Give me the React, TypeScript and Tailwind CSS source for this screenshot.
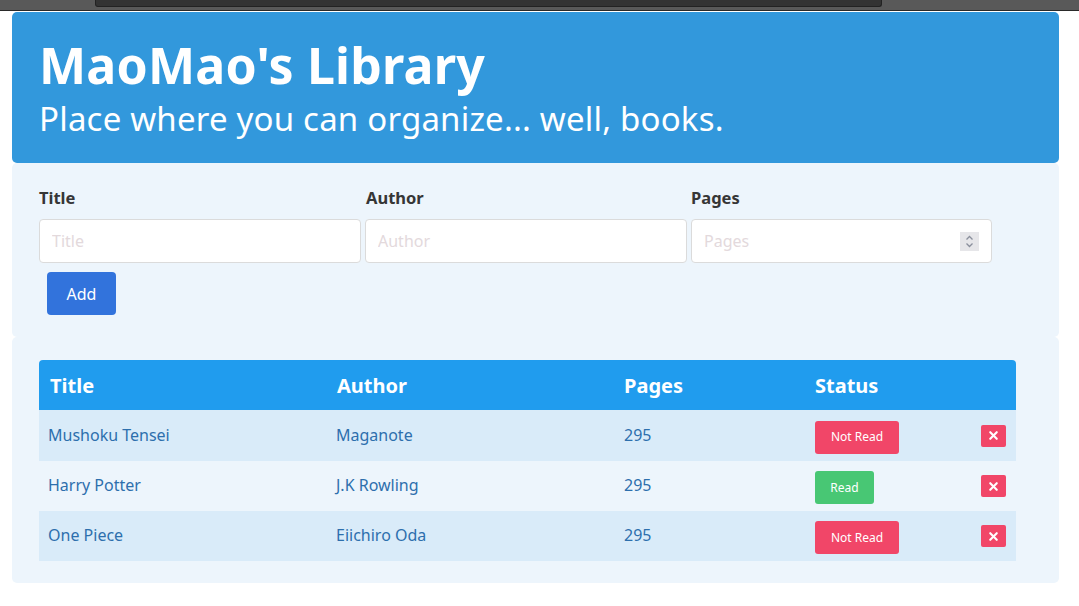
import React from 'react';
import { X } from 'lucide-react';

type Book = { title: string; author: string; pages: number; read: boolean };

const books: Book[] = [
  { title: 'Mushoku Tensei', author: 'Maganote', pages: 295, read: false },
  { title: 'Harry Potter', author: 'J.K Rowling', pages: 295, read: true },
  { title: 'One Piece', author: 'Eiichiro Oda', pages: 295, read: false },
];

const Spinner: React.FC = () => (
  <div className="w-[19px] h-[19px] bg-[#e6e6e9] flex items-center justify-center">
    <svg width="9" height="13" viewBox="0 0 9 13" fill="none" stroke="#8a8f9c" strokeWidth="1.3">
      <path d="M1.5 4.5 L4.5 1.5 L7.5 4.5" />
      <path d="M1.5 8.5 L4.5 11.5 L7.5 8.5" />
    </svg>
  </div>
);

const App: React.FC = () => {
  return (
    <div className="min-h-screen bg-white font-['Noto_Sans',sans-serif]">
      {/* window chrome */}
      <div className="h-[11px] bg-[#595959] border-b border-[#2a2a2a]">
        <div className="ml-[95px] w-[787px] h-[7px] bg-[#333333] border border-t-0 border-[#222] rounded-b-[3px]" />
      </div>

      <div className="pl-[12px] pr-[20px] pt-[1px]">
        <header className="bg-[#3298dc] rounded-[5px] px-[27px] pt-[21px] h-[151px] text-white">
          <h1 className="text-[50px] font-bold leading-[64px] tracking-[0.2px]">MaoMao's Library</h1>
          <p className="text-[33px] leading-[44px] tracking-[0.2px]">Place where you can organize... well, books.</p>
        </header>

        <section className="bg-[#edf5fc] rounded-[5px] px-[27px] pt-[25px] h-[174px]">
          <div className="grid grid-cols-[322px_322px_301px] gap-x-[4px]">
            <label className="text-[16.5px] font-bold text-[#363636] leading-[20px]">Title</label>
            <label className="text-[16.5px] font-bold text-[#363636] leading-[20px] pl-px">Author</label>
            <label className="text-[16.5px] font-bold text-[#363636] leading-[20px]">Pages</label>
            <input
              placeholder="Title"
              className="mt-[11px] h-[44px] bg-white border border-[#dbdbdb] rounded-[4px] px-[12px] text-[16px] placeholder:text-[#e3d9dc] outline-none"
            />
            <input
              placeholder="Author"
              className="mt-[11px] h-[44px] bg-white border border-[#dbdbdb] rounded-[4px] px-[12px] text-[16px] placeholder:text-[#e3d9dc] outline-none"
            />
            <div className="mt-[11px] h-[44px] bg-white border border-[#dbdbdb] rounded-[4px] pl-[12px] pr-[12px] flex items-center">
              <input
                placeholder="Pages"
                className="flex-1 min-w-0 text-[16px] placeholder:text-[#e3d9dc] outline-none"
              />
              <Spinner />
            </div>
          </div>
          <button className="mt-[9px] ml-[8px] w-[69px] h-[43px] bg-[#3273dc] rounded-[4px] text-white text-[16px]">
            Add
          </button>
        </section>

        <section className="bg-[#edf5fc] rounded-[5px] pl-[27px] pr-[43px] pt-[23px] pb-[22px]">
          <div className="grid grid-cols-[288px_288px_191px_1fr] h-[50px] items-center bg-[#209cee] rounded-t-[4px] text-white text-[20px] font-bold">
            <div className="pl-[11px] mt-[2px]">Title</div>
            <div className="pl-[10px] mt-[2px]">Author</div>
            <div className="pl-[9px] mt-[2px]">Pages</div>
            <div className="pl-[9px] mt-[2px]">Status</div>
          </div>
          {books.map((b, i) => (
            <div
              key={b.title}
              className={`grid grid-cols-[288px_288px_191px_1fr] items-center text-[16px] text-[#2d6fad] ${
                i === 0 ? 'h-[51px]' : 'h-[50px]'
              } ${i % 2 === 0 ? 'bg-[#d9ebf9]' : 'bg-[#edf5fc]'}`}
            >
              <div className="pl-[9px] -mt-[2px]">{b.title}</div>
              <div className="pl-[9px] -mt-[2px]">{b.author}</div>
              <div className="pl-[9px] -mt-[2px]">{b.pages}</div>
              <div className="pl-[9px] pr-[10px] flex items-center justify-between">
                {b.read ? (
                  <button className="w-[59px] h-[33px] bg-[#48c774] rounded-[3px] text-white text-[12px] mt-[3px]">
                    Read
                  </button>
                ) : (
                  <button className="w-[84px] h-[33px] bg-[#f14668] rounded-[3px] text-white text-[12px] mt-[3px]">
                    Not Read
                  </button>
                )}
                <button className="w-[25px] h-[22px] bg-[#f14668] rounded-[2px] flex items-center justify-center">
                  <X size={13} strokeWidth={4} color="white" />
                </button>
              </div>
            </div>
          ))}
        </section>
      </div>
    </div>
  );
};

export default App;
